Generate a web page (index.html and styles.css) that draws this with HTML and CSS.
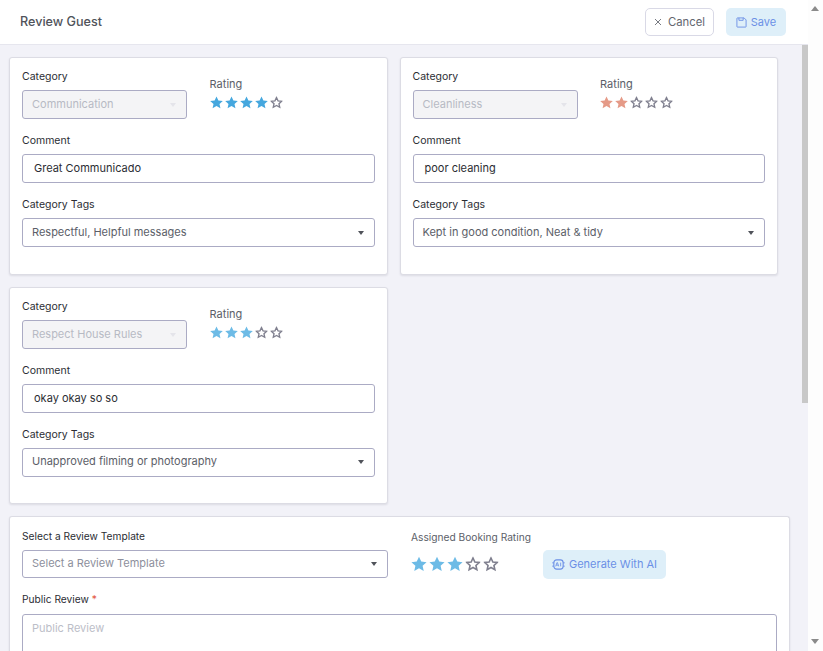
FILE: index.html
```html
<!DOCTYPE html>
<html lang="en">
<head>
<meta charset="utf-8">
<title>Review Guest</title>
<link rel="stylesheet" href="styles.css">
</head>
<body>
<svg class="defs" width="0" height="0" aria-hidden="true">
  <defs>
    <path id="star" d="M12 2.2l3 6.5 7.1.8-5.3 4.8 1.5 7-6.3-3.6-6.3 3.6 1.5-7L1.9 9.5 9 8.7z"/>
  </defs>
</svg>
<div class="app">
  <div class="main">
    <header class="topbar">
      <h1 class="title">Review Guest</h1>
      <div class="actions">
        <button class="btn btn-cancel">
          <svg class="btn-icon x-icon" viewBox="0 0 12 12"><path d="M1.5 1.5l9 9M10.5 1.5l-9 9" fill="none" stroke="currentColor" stroke-width="1.3"/></svg>
          <span class="btn-text">Cancel</span>
        </button>
        <button class="btn btn-save">
          <svg class="btn-icon" viewBox="0 0 12 12"><path d="M1 1.5a.5.5 0 0 1 .5-.5h7.3L11 3.2v7.3a.5.5 0 0 1-.5.5h-9a.5.5 0 0 1-.5-.5zM3.2 1v2.6h4.6V1" fill="none" stroke="currentColor"/></svg>
          <span class="btn-text">Save</span>
        </button>
      </div>
    </header>
    <div class="content">
      <div class="cards">
        <section class="card">
          <div class="top-row">
            <div class="field-cat">
              <div class="label">Category</div>
              <div class="select disabled"><span>Communication</span><i class="caret"></i></div>
            </div>
            <div class="rating">
              <div class="rating-label">Rating</div>
              <div class="stars blue">
                <svg class="star" viewBox="0 0 24 24"><use href="#star"/></svg>
                <svg class="star" viewBox="0 0 24 24"><use href="#star"/></svg>
                <svg class="star" viewBox="0 0 24 24"><use href="#star"/></svg>
                <svg class="star" viewBox="0 0 24 24"><use href="#star"/></svg>
                <svg class="star off" viewBox="0 0 24 24"><use href="#star"/></svg>
              </div>
            </div>
          </div>
          <div class="label">Comment</div>
          <div class="input">Great Communicado</div>
          <div class="label">Category Tags</div>
          <div class="select"><span>Respectful, Helpful messages</span><i class="caret"></i></div>
        </section>
        <section class="card">
          <div class="top-row">
            <div class="field-cat">
              <div class="label">Category</div>
              <div class="select disabled"><span>Cleanliness</span><i class="caret"></i></div>
            </div>
            <div class="rating">
              <div class="rating-label">Rating</div>
              <div class="stars red">
                <svg class="star" viewBox="0 0 24 24"><use href="#star"/></svg>
                <svg class="star" viewBox="0 0 24 24"><use href="#star"/></svg>
                <svg class="star off" viewBox="0 0 24 24"><use href="#star"/></svg>
                <svg class="star off" viewBox="0 0 24 24"><use href="#star"/></svg>
                <svg class="star off" viewBox="0 0 24 24"><use href="#star"/></svg>
              </div>
            </div>
          </div>
          <div class="label">Comment</div>
          <div class="input">poor cleaning</div>
          <div class="label">Category Tags</div>
          <div class="select"><span>Kept in good condition, Neat &amp; tidy</span><i class="caret"></i></div>
        </section>
        <section class="card">
          <div class="top-row">
            <div class="field-cat">
              <div class="label">Category</div>
              <div class="select disabled"><span>Respect House Rules</span><i class="caret"></i></div>
            </div>
            <div class="rating">
              <div class="rating-label">Rating</div>
              <div class="stars light">
                <svg class="star" viewBox="0 0 24 24"><use href="#star"/></svg>
                <svg class="star" viewBox="0 0 24 24"><use href="#star"/></svg>
                <svg class="star" viewBox="0 0 24 24"><use href="#star"/></svg>
                <svg class="star off" viewBox="0 0 24 24"><use href="#star"/></svg>
                <svg class="star off" viewBox="0 0 24 24"><use href="#star"/></svg>
              </div>
            </div>
          </div>
          <div class="label">Comment</div>
          <div class="input">okay okay so so</div>
          <div class="label">Category Tags</div>
          <div class="select"><span>Unapproved filming or photography</span><i class="caret"></i></div>
        </section>
      </div>
      <section class="card card-wide">
        <div class="template-row">
          <div class="template-field">
            <div class="label label-sm">Select a Review Template</div>
            <div class="select placeholder"><span>Select a Review Template</span><i class="caret"></i></div>
          </div>
          <div class="booking">
            <div class="rating-label small">Assigned Booking Rating</div>
            <div class="stars light large">
              <svg class="star" viewBox="0 0 24 24"><use href="#star"/></svg>
              <svg class="star" viewBox="0 0 24 24"><use href="#star"/></svg>
              <svg class="star" viewBox="0 0 24 24"><use href="#star"/></svg>
              <svg class="star off" viewBox="0 0 24 24"><use href="#star"/></svg>
              <svg class="star off" viewBox="0 0 24 24"><use href="#star"/></svg>
            </div>
          </div>
          <button class="btn btn-save btn-ai">
            <svg class="ai-icon" viewBox="0 0 14 14"><rect x="2" y="2" width="10" height="10" rx="3" fill="none" stroke="currentColor" stroke-width="1.2"/><path d="M0.3 5.2h1.7M0.3 8.8h1.7M12 5.2h1.7M12 8.8h1.7" stroke="currentColor"/><path d="M4 9l1.3-4h.6l1.3 4M4.5 7.7h2.2M9.3 5v4" fill="none" stroke="currentColor" stroke-width=".9"/></svg>
            <span class="btn-text">Generate With AI</span>
          </button>
        </div>
        <div class="label label-sm label-gap">Public Review <em class="req">*</em></div>
        <div class="textarea">Public Review</div>
      </section>
      <div class="thumb"></div>
    </div>
  </div>
  <div class="scrollbar">
    <i class="arrow-up"></i>
    <i class="arrow-down"></i>
  </div>
</div>
</body>
</html>
```
FILE: styles.css
```css
* { box-sizing: border-box; }
html, body { margin: 0; height: 100%; overflow: hidden; }
body { font-family: "Inter", "Liberation Sans", sans-serif; font-size: 11px; color: #212529; background: #fff; }
.defs { position: absolute; }
.app { display: flex; width: 823px; height: 651px; }
.main { width: 808px; display: flex; flex-direction: column; }
.topbar { height: 45px; flex: none; display: flex; align-items: center; justify-content: space-between; padding: 0 22px 0 20px; background: #fff; border-bottom: 1px solid #e6e6ee; }
.title { margin: 0 0 2px; font-size: 12.6px; font-weight: 500; color: #50535a; }
.actions { display: flex; gap: 12px; }
.btn { display: flex; align-items: center; justify-content: center; gap: 4px; height: 28px; border-radius: 5px; font: 400 11px "Inter", "Liberation Sans", sans-serif; padding: 0; }
.btn-text { margin-bottom: 1px; }
.btn-cancel { width: 69px; background: #fff; color: #63666e; border: 1px solid #d9d9e6; gap: 5px; font-size: 11.3px; }
.btn-save { width: 60px; background: #deeff9; color: #6b8fe6; border: 0; }
.btn-icon { width: 11px; height: 11px; }
.x-icon { width: 8px; height: 8px; margin: 0 1px 1px 0; }
.content { position: relative; flex: 1; overflow: hidden; background: #f2f2f8; padding: 12px 0 0 9px; }
.cards { display: grid; grid-template-columns: 378.5px 378.5px; gap: 12px; align-items: start; }
.card { background: #fff; border: 1px solid #dcdce4; border-radius: 3px; box-shadow: 0 1px 2px rgba(60, 60, 80, .12); padding: 12px 12px 0; height: 217.5px; }
.top-row { display: flex; height: 64px; }
.field-cat { width: 165px; }
.label { font-size: 10.5px; line-height: 14px; height: 14px; color: #2b2d33; margin-bottom: 6px; }
.label-sm { font-size: 10.2px; }
.label-gap { margin-bottom: 8px; }
.select, .input, .textarea { border: 1px solid #ababc4; border-radius: 3px; background: #fff; font-size: 11px; }
.select { display: flex; align-items: center; justify-content: space-between; height: 29px; padding: 0 10px 2px 9px; color: #5b5e68; margin-bottom: 15px; }
.input { height: 29px; line-height: 27px; padding-left: 11px; color: #2b2d33; margin-bottom: 15px; }
.field-cat .select { background: #f4f4f6; color: #b7bac4; margin: 0; padding-bottom: 1px; }
.caret { width: 0; height: 0; border: 3.5px solid transparent; border-top: 4px solid #50535a; border-bottom: 0; margin-top: 2px; }
.disabled .caret { border-top-color: #e4e4ea; }
.rating { margin: 7px 0 0 22.6px; }
.rating-label { font-size: 11px; line-height: 14px; color: #5b5e68; }
.rating-label.small { font-size: 10.2px; }
.stars { display: flex; margin: 4px 0 0 -1px; }
.star { width: 15px; height: 15px; }
.blue .star { fill: #45a7de; }
.light .star { fill: #6dbbe6; }
.red .star { fill: #e59a87; }
.stars .star.off { fill: none; stroke: #80808f; stroke-width: 2.6; transform: scale(.82); }
.card-wide { width: 781px; margin-top: 12px; height: 200px; border-bottom: 0; }
.template-row { display: flex; height: 63px; align-items: flex-start; }
.template-field { width: 366px; }
.template-field .select { margin: 7px 0 0; height: 28px; }
.template-field .label { margin-bottom: 0; }
.placeholder { color: #8d8f9c; }
.booking { margin: 1px 0 0 23px; width: 132px; }
.stars.large { margin: 11px 0 0 -1px; }
.large .star { width: 18px; height: 18px; }
.btn-ai { width: 123px; height: 29px; margin-top: 21px; font-size: 11px; }
.ai-icon { width: 13px; height: 13px; }
.label .req { color: #e2563f; font-style: normal; }
.textarea { width: 755px; height: 120px; padding: 6px 9px; color: #bcbec8; }
.thumb { position: absolute; top: 0; right: 0; width: 6px; height: 358px; background: #c8c8c8; }
.scrollbar { position: relative; flex: 1; background: #fdfdfd; }
.arrow-up, .arrow-down { position: absolute; left: 3px; width: 0; height: 0; border: 4.5px solid transparent; }
.arrow-up { top: 6px; border-top: 0; border-bottom: 5px solid #8a8a8a; }
.arrow-down { top: 639px; border-bottom: 0; border-top: 5px solid #8a8a8a; }
```
